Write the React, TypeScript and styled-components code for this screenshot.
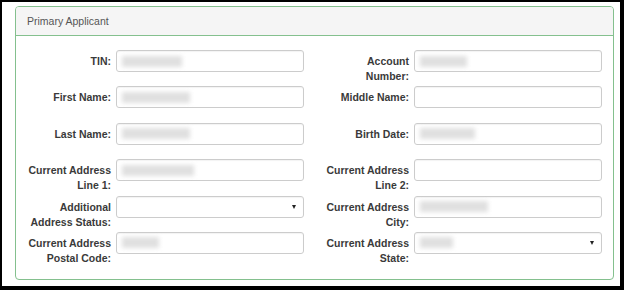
import styled, { createGlobalStyle } from 'styled-components';

const GlobalStyle = createGlobalStyle`
    html, body {
        margin: 0;
        padding: 0;
        background: #000;
    }
`;

const Frame = styled.div`
    box-sizing: border-box;
    width: 624px;
    height: 290px;
    background: #fff;
    border-style: solid;
    border-color: #000;
    border-width: 2px 4px 4px 2px;
    padding: 4px 6px 6px 13px;
    font-family: 'Liberation Sans', Arial, sans-serif;
`;

const Panel = styled.section`
    box-sizing: border-box;
    width: 599px;
    height: 274px;
    border: 1px solid #84c08e;
    border-radius: 4px;
    overflow: hidden;
`;

const PanelHeading = styled.div`
    height: 28px;
    background: #f5f5f5;
    border-bottom: 1px solid #84c08e;
    padding-left: 11px;
    display: flex;
    align-items: center;
    font-size: 10.5px;
    color: #555;
`;

const PanelBody = styled.div`
    padding-top: 14px;
    display: grid;
    grid-template-columns: 298px 298px;
    grid-auto-rows: 22px;
    row-gap: 14.4px;
`;

const Field = styled.div`
    display: grid;
    grid-template-columns: 95px 188px;
    column-gap: 5px;
    align-items: start;
`;

const Label = styled.label`
    padding-top: 4px;
    text-align: right;
    font-size: 10.5px;
    font-weight: bold;
    line-height: 15px;
    color: #3a3a3a;
`;

const Control = styled.div`
    box-sizing: border-box;
    height: 22px;
    border: 1px solid #ccc;
    border-radius: 3px;
    background: #fff;
    box-shadow: inset 0 1px 1px rgba(0, 0, 0, 0.05);
    display: flex;
    align-items: center;
    padding: 0 7px 0 5px;
`;

const Redacted = styled.span<{ $w: number }>`
    display: inline-block;
    width: ${(p) => p.$w}px;
    height: 11px;
    background: #e0e0e0;
    filter: blur(2.2px);
`;

const Caret = styled.span`
    margin-left: auto;
    width: 0;
    height: 0;
    border-left: 2.5px solid transparent;
    border-right: 2.5px solid transparent;
    border-top: 4px solid #222;
`;

type FieldData = { label: string[]; value?: number; select?: boolean };

const fields: FieldData[] = [
    { label: ['TIN:'], value: 60 },
    { label: ['Account', 'Number:'], value: 47 },
    { label: ['First Name:'], value: 68 },
    { label: ['Middle Name:'] },
    { label: ['Last Name:'], value: 68 },
    { label: ['Birth Date:'], value: 55 },
    { label: ['Current Address', 'Line 1:'], value: 72 },
    { label: ['Current Address', 'Line 2:'] },
    { label: ['Additional', 'Address Status:'], select: true },
    { label: ['Current Address', 'City:'], value: 68 },
    { label: ['Current Address', 'Postal Code:'], value: 37 },
    { label: ['Current Address', 'State:'], value: 33, select: true },
];

const App = () => {
    return (
        <>
            <GlobalStyle />
            <Frame>
                <Panel>
                    <PanelHeading>Primary Applicant</PanelHeading>
                    <PanelBody>
                        {fields.map((f, i) => (
                            <Field key={i}>
                                <Label>
                                    {f.label.map((line, j) => (
                                        <div key={j}>{line}</div>
                                    ))}
                                </Label>
                                <Control>
                                    {f.value ? <Redacted $w={f.value} /> : null}
                                    {f.select ? <Caret /> : null}
                                </Control>
                            </Field>
                        ))}
                    </PanelBody>
                </Panel>
            </Frame>
        </>
    );
};

export default App;
